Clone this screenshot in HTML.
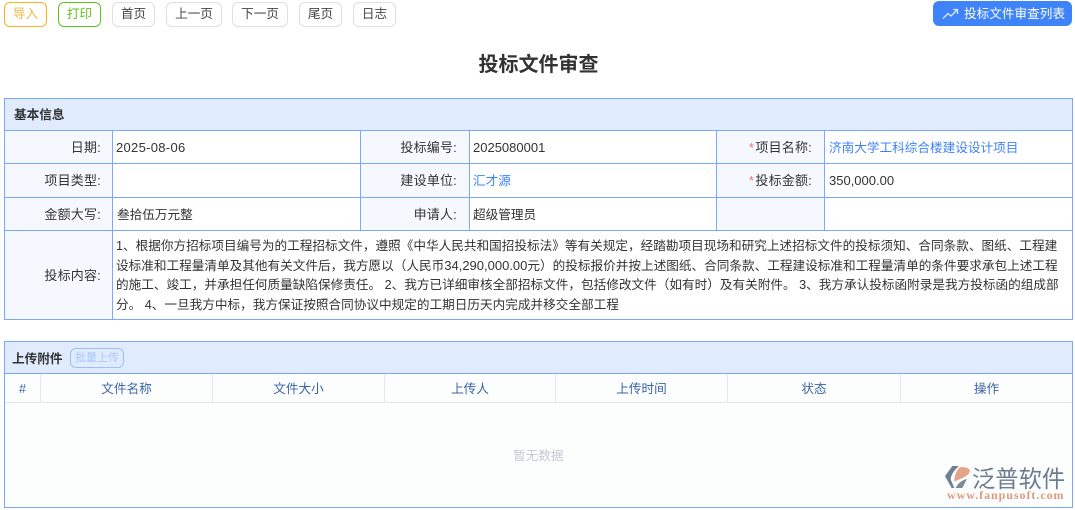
<!DOCTYPE html>
<html lang="zh-CN"><head><meta charset="utf-8"><title>投标文件审查</title>
<style>
*{box-sizing:border-box}
html,body{margin:0;padding:0;background:#fff}
body{width:1075px;height:510px;position:relative;overflow:hidden;font-family:"Liberation Sans","Noto Sans CJK SC",sans-serif;font-size:12.63px;color:#333}
.a{position:absolute;white-space:nowrap}
.btn{position:absolute;top:2px;height:25px;border:1px solid #dcdfe6;border-radius:6px;text-align:center;line-height:23px;font-size:12.6px;color:#444;background:#fff}
.h{position:absolute;background:#7aa9f7}
.lab{position:absolute;background:#f5f8ff}
.t{position:absolute;white-space:nowrap;line-height:20px;height:20px}
.r{text-align:right;font-size:13px;letter-spacing:.2px}
.n{font-size:13px}
.th{position:absolute;top:379px;height:20px;line-height:20px;text-align:center;color:#3a62a8;white-space:nowrap}
.v{position:absolute;background:#e4e7ed;width:1px;top:374px;height:28px}
.s{position:absolute;color:#f56c6c;line-height:20px;height:20px}
</style></head><body>
<div class="btn" style="left:4px;width:43px;border-color:#fbb01f;color:#f9b53f">导入</div>
<div class="btn" style="left:58px;width:43px;border-color:#5ac71b;color:#62c21c">打印</div>
<div class="btn" style="left:112px;width:43px">首页</div>
<div class="btn" style="left:166px;width:56px">上一页</div>
<div class="btn" style="left:232px;width:56px">下一页</div>
<div class="btn" style="left:299px;width:43px">尾页</div>
<div class="btn" style="left:353px;width:43px">日志</div>
<div class="a" style="left:933px;top:1px;width:139px;height:25px;background:#3f83f8;border-radius:6px"></div>
<svg class="a" style="left:942px;top:8px" width="17" height="12" viewBox="0 0 17 12"><path d="M1 10.5 L6 5.5 L9 8 L15 2 M11 1.5 H15.5 V6" fill="none" stroke="#dbe8ff" stroke-width="1.3"/></svg>
<div class="a" style="left:964px;top:4px;line-height:20px;color:#fff">投标文件审查列表</div>
<div class="a" style="left:0;width:1077px;top:50px;text-align:center;font-size:20px;font-weight:bold;line-height:30px;color:#333">投标文件审查</div>

<!-- panel 1 -->
<div class="a" style="left:5px;top:99px;width:1067px;height:31px;background:#e0ebfe"></div>
<div class="lab" style="left:5px;top:131px;width:107px;height:188px"></div>
<div class="lab" style="left:361px;top:131px;width:108px;height:99px"></div>
<div class="lab" style="left:717px;top:131px;width:107px;height:99px"></div>
<div class="h" style="left:4px;top:98px;width:1069px;height:1px"></div>
<div class="h" style="left:4px;top:130px;width:1069px;height:1px"></div>
<div class="h" style="left:4px;top:163px;width:1069px;height:1px"></div>
<div class="h" style="left:4px;top:197px;width:1069px;height:1px"></div>
<div class="h" style="left:4px;top:230px;width:1069px;height:1px"></div>
<div class="h" style="left:4px;top:319px;width:1069px;height:1px"></div>
<div class="h" style="left:4px;top:98px;width:1px;height:222px"></div>
<div class="h" style="left:1072px;top:98px;width:1px;height:222px"></div>
<div class="h" style="left:112px;top:130px;width:1px;height:190px"></div>
<div class="h" style="left:360px;top:130px;width:1px;height:100px"></div>
<div class="h" style="left:469px;top:130px;width:1px;height:100px"></div>
<div class="h" style="left:716px;top:130px;width:1px;height:100px"></div>
<div class="h" style="left:824px;top:130px;width:1px;height:100px"></div>
<div class="t" style="left:14px;top:105px;font-weight:bold">基本信息</div>

<div class="t r" style="right:974px;top:138px">日期:</div>
<div class="t n" style="left:116px;top:138px;letter-spacing:.3px">2025-08-06</div>
<div class="t r" style="right:618px;top:138px">投标编号:</div>
<div class="t n" style="left:473px;top:138px">2025080001</div>
<div class="s" style="left:749px;top:138px">*</div>
<div class="t r" style="right:263px;top:138px">项目名称:</div>
<div class="t" style="left:829px;top:138px;color:#3f83f8">济南大学工科综合楼建设设计项目</div>

<div class="t r" style="right:974px;top:171px">项目类型:</div>
<div class="t r" style="right:618px;top:171px">建设单位:</div>
<div class="t" style="left:473px;top:171px;color:#3f83f8">汇才源</div>
<div class="s" style="left:749px;top:171px">*</div>
<div class="t r" style="right:263px;top:171px">投标金额:</div>
<div class="t n" style="left:829px;top:171px">350,000.00</div>

<div class="t r" style="right:974px;top:205px">金额大写:</div>
<div class="t" style="left:117px;top:205px">叁拾伍万元整</div>
<div class="t r" style="right:618px;top:205px">申请人:</div>
<div class="t" style="left:473px;top:205px">超级管理员</div>

<div class="t r" style="right:974px;top:266px">投标内容:</div>
<div class="t" style="left:116px;top:236px">1、根据你方招标项目编号为的工程招标文件，遵照《中华人民共和国招投标法》等有关规定，经踏勘项目现场和研究上述招标文件的投标须知、合同条款、图纸、工程建</div>
<div class="t" style="left:116px;top:256px">设标准和工程量清单及其他有关文件后，我方愿以（人民币<span class="n">34,290,000.00</span>元）的投标报价并按上述图纸、合同条款、工程建设标准和工程量清单的条件要求承包上述工程</div>
<div class="t" style="left:116px;top:275px">的施工、竣工，并承担任何质量缺陷保修责任。 2、我方已详细审核全部招标文件，包括修改文件（如有时）及有关附件。 3、我方承认投标函附录是我方投标函的组成部</div>
<div class="t" style="left:116px;top:295px">分。 4、一旦我方中标，我方保证按照合同协议中规定的工期日历天内完成并移交全部工程</div>

<!-- panel 2 -->
<div class="a" style="left:5px;top:342px;width:1067px;height:31px;background:#e0ebfe"></div>
<div class="a" style="left:5px;top:374px;width:1067px;height:133px;background:#fcfefe"></div>
<div class="h" style="left:4px;top:341px;width:1069px;height:1px"></div>
<div class="h" style="left:4px;top:373px;width:1069px;height:1px"></div>
<div class="h" style="left:4px;top:507px;width:1069px;height:1px"></div>
<div class="h" style="left:4px;top:341px;width:1px;height:167px"></div>
<div class="h" style="left:1072px;top:341px;width:1px;height:167px"></div>
<div class="t" style="left:12px;top:349px;font-weight:bold">上传附件</div>
<div class="a" style="left:70px;top:348px;width:54px;height:20px;border:1px solid #9cbff8;border-radius:6px;text-align:center;line-height:18px;font-size:11px;color:#a9c7f8">批量上传</div>
<div class="a" style="left:5px;top:402px;width:1067px;height:1px;background:#e4e7ed"></div>
<div class="v" style="left:40px"></div><div class="v" style="left:212px"></div><div class="v" style="left:384px"></div><div class="v" style="left:555px"></div><div class="v" style="left:727px"></div><div class="v" style="left:900px"></div>
<div class="th" style="left:5px;width:35px">#</div>
<div class="th" style="left:41px;width:171px">文件名称</div>
<div class="th" style="left:213px;width:171px">文件大小</div>
<div class="th" style="left:385px;width:170px">上传人</div>
<div class="th" style="left:556px;width:171px">上传时间</div>
<div class="th" style="left:728px;width:172px">状态</div>
<div class="th" style="left:901px;width:171px">操作</div>
<div class="t" style="left:513px;top:446px;color:#c5c8cf">暂无数据</div>

<!-- logo -->
<svg class="a" style="left:945px;top:466px" width="25" height="22" viewBox="0 0 75 65" preserveAspectRatio="none">
<path d="M0 30 L22 0 H42 C28 12 18 25 17 40 L28 65 H20 Z" fill="#6d7f91"/>
<path d="M44 4 C60 2 72 6 75 14 C72 30 50 36 28 46 C28 28 34 14 44 4 Z" fill="#e3a488"/>
<path d="M32 65 C38 52 50 42 66 38 L52 65 Z" fill="#7b8b9b"/>
</svg>
<div class="a" style="left:972px;top:462px;font-size:23.3px;line-height:30px;color:#6b7d90;font-family:'Noto Sans CJK SC',sans-serif">泛普软件</div>
<div class="a" style="left:947px;top:488px;font-size:12px;line-height:14px;font-weight:bold;color:#dd9a7e;font-family:'Liberation Serif',serif;letter-spacing:.95px">www.fanpusoft.com</div>
</body></html>
